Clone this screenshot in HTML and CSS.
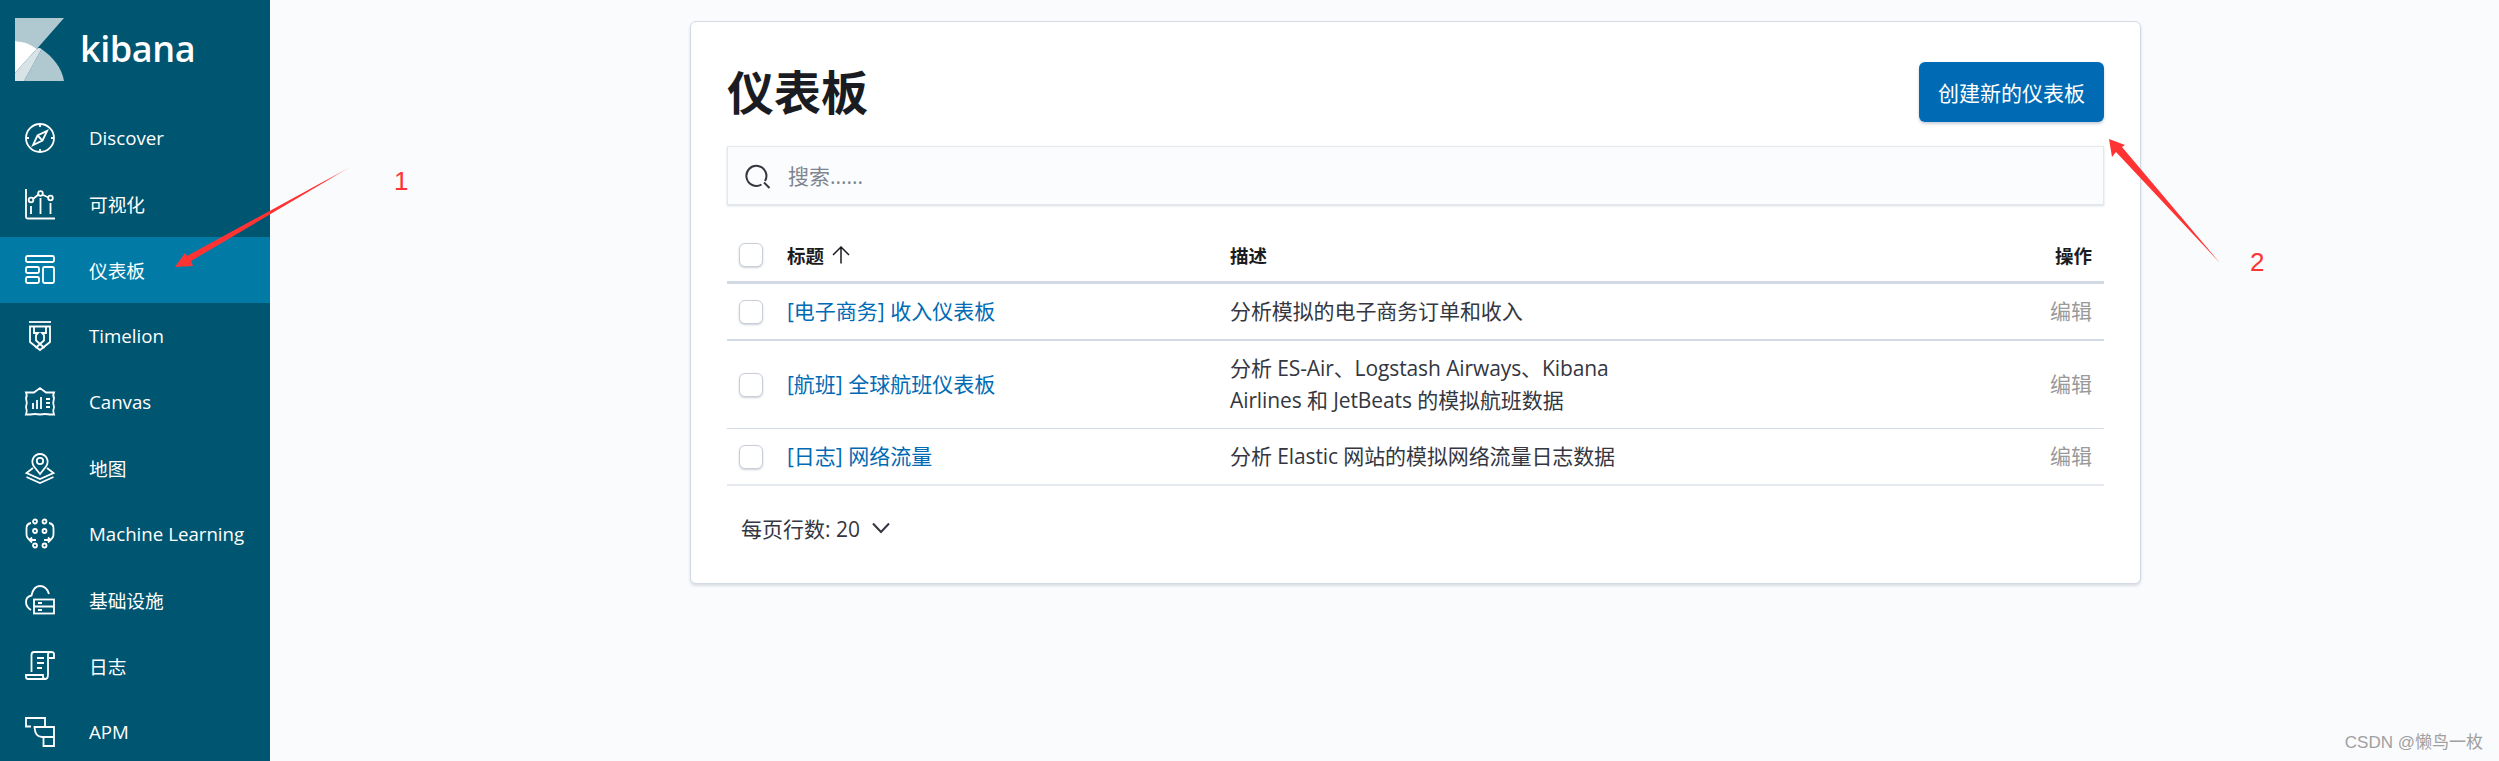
FILE: index.html
```html
<!DOCTYPE html>
<html lang="zh">
<head>
<meta charset="utf-8">
<title>仪表板 - Kibana</title>
<link rel="stylesheet" href="styles.css">
</head>
<body>
<div class="app">
  <aside class="sidebar">
    <div class="brand">
      <svg class="logo" viewBox="0 0 49 63" width="49" height="63">
        <path fill="#b0c8d0" d="M0 0H49L20 33C13 26 8 23.500 0 23Z"/>
        <path fill="#b0c8d0" d="M26.500 31C38 39 47 50 49 63H9Z"/>
        <path fill="#ffffff" d="M0 23C9 23.500 15 26 21.500 31L0 55Z"/>
        <path fill="#d7e3e7" d="M21.500 31Q24 29 26.500 31L9 63H0V55Z"/>
      </svg>
      <span class="wordmark">kibana</span>
    </div>
    <nav class="nav">
      <a class="nav-item"><svg class="ico" viewBox="0 0 30 30"><circle cx="15" cy="15" r="14"/><path d="M15 1V4M15 26V29M1 15H4M26 15H29"/><path d="M22 8L17.500 17.500L8 22L12.500 12.500Z"/><path d="M12.500 12.500L17.500 17.500"/></svg><span class="nav-label">Discover</span></a>
      <a class="nav-item"><svg class="ico" viewBox="0 0 30 30"><path d="M1 0V28Q1 29.500 2.500 29.500H30"/><path d="M8 10L13.500 5.500M18 6L23.500 8.500"/><circle cx="6" cy="11" r="2.300"/><circle cx="15.500" cy="4.500" r="2.300"/><circle cx="25.500" cy="9" r="2.300"/><path d="M6 17V25M15.500 9V25M25.500 14V25"/></svg><span class="nav-label">可视化</span></a>
      <a class="nav-item active"><svg class="ico" viewBox="0 0 30 30"><rect x="1" y="1" width="28" height="6" rx="1.500"/><rect x="1" y="12" width="13" height="6" rx="1.500"/><rect x="1" y="22" width="13" height="6" rx="1.500"/><rect x="18" y="12" width="11" height="16" rx="1.500"/></svg><span class="nav-label">仪表板</span></a>
      <a class="nav-item"><svg class="ico" viewBox="0 0 30 30"><path d="M4 1H26"/><path d="M5 5.500H25V21L15 29L5 21Z"/><path d="M9 6V12H13L11 14V19M21 6V12H17L19 14V19M10.500 19L19.500 27M19.500 19L10.500 27"/></svg><span class="nav-label">Timelion</span></a>
      <a class="nav-item"><svg class="ico" viewBox="0 0 30 30"><path d="M9 5.500L15 1L21 5.500H29Q27.500 9 29 11Q27.500 16 29 20Q27.500 24 29 27.500H25Q20 26.500 15 27.500Q10 26.500 5 27.500H1Q2.500 24 1 20Q2.500 16 1 11Q2.500 9 1 5.500Z"/><path d="M8 16V22M12 13V22M16 10V22M21 12H25M21 16H25M21 20H25"/></svg><span class="nav-label">Canvas</span></a>
      <a class="nav-item"><svg class="ico" viewBox="0 0 30 30"><path d="M15 21L9 13.500C5 8 9 1 15 1C21 1 25 8 21 13.500Z"/><circle cx="15" cy="8" r="3.200"/><path d="M8 15L1.500 20L15 26L28.500 20L22 15"/><path d="M1.500 24L15 30L28.500 24"/></svg><span class="nav-label">地图</span></a>
      <a class="nav-item"><svg class="ico" viewBox="0 0 30 30"><circle cx="10" cy="2.500" r="2"/><circle cx="19.500" cy="2.500" r="2"/><circle cx="10" cy="12" r="2"/><circle cx="19.500" cy="12" r="2"/><circle cx="10" cy="26.500" r="2"/><circle cx="19.500" cy="26.500" r="2"/><path d="M6 4Q1 5 1.500 10V15Q1.500 19 5 21H11M7 18.500L4.500 21L7 23.500"/><path d="M24 4Q29 5 28.500 10V15Q28.500 19 25 21H19M23 18.500L25.500 21L23 23.500"/></svg><span class="nav-label">Machine Learning</span></a>
      <a class="nav-item"><svg class="ico" viewBox="0 0 30 30"><path d="M6 25Q1 22 1 17Q1 11.500 6.500 10.500Q8.500 1 15 1Q21.500 1 24 9"/><rect x="9" y="14.500" width="20" height="14"/><path d="M9 21.500H29M13 18H17M13 25H17"/></svg><span class="nav-label">基础设施</span></a>
      <a class="nav-item"><svg class="ico" viewBox="0 0 30 30"><path d="M23 23V3Q23 1 26 1Q29 1 29 3V7H24"/><path d="M26 1H9Q6.500 1 6.500 4V21"/><path d="M12 7H19M12 12H19M12 17H17"/><path d="M1 24H18V25.500Q18 28 20.500 28H3Q1 28 1 26ZM20.500 28Q23 28 23 23"/></svg><span class="nav-label">日志</span></a>
      <a class="nav-item"><svg class="ico" viewBox="0 0 30 30"><path d="M6 9.500H1V1H20V9.500"/><path d="M9.500 10H29V20H17Q10 20 9.500 10Z"/><path d="M18.500 20V29H29V20"/></svg><span class="nav-label">APM</span></a>
    </nav>
  </aside>
  <main class="main">
    <section class="card">
      <header class="card-head">
        <h1 class="title">仪表板</h1>
        <button class="primary-btn">创建新的仪表板</button>
      </header>
      <div class="search">
        <svg class="search-ico" viewBox="0 0 24 24" width="24" height="24"><path d="M15.500 20.500A10 10 0 1 1 19 17"/><path d="M18 18.500L23.500 24"/></svg>
        <span class="placeholder">搜索......</span>
      </div>
      <table class="table">
        <thead>
          <tr class="head-row">
            <th class="col-check"><span class="checkbox"></span></th>
            <th class="col-title"><span class="sort">标题<svg class="sort-ico" viewBox="0 0 18 18" width="18" height="18"><path d="M9 17.500V1M1 9L9 1L17 9"/></svg></span></th>
            <th class="col-desc">描述</th>
            <th class="col-act">操作</th>
          </tr>
        </thead>
        <tbody>
          <tr class="row-a">
            <td class="col-check"><span class="checkbox"></span></td>
            <td class="col-title"><a class="link">[电子商务] 收入仪表板</a></td>
            <td class="col-desc"><div class="desc">分析模拟的电子商务订单和收入</div></td>
            <td class="col-act edit">编辑</td>
          </tr>
          <tr class="row-b">
            <td class="col-check"><span class="checkbox"></span></td>
            <td class="col-title"><a class="link">[航班] 全球航班仪表板</a></td>
            <td class="col-desc"><div class="desc">分析 ES-Air、Logstash Airways、Kibana Airlines 和 JetBeats 的模拟航班数据</div></td>
            <td class="col-act edit">编辑</td>
          </tr>
          <tr class="row-c">
            <td class="col-check"><span class="checkbox"></span></td>
            <td class="col-title"><a class="link">[日志] 网络流量</a></td>
            <td class="col-desc"><div class="desc">分析 Elastic 网站的模拟网络流量日志数据</div></td>
            <td class="col-act edit">编辑</td>
          </tr>
        </tbody>
      </table>
      <div class="pager">
        <span>每页行数: 20</span>
        <svg class="chev" viewBox="0 0 18 12" width="18" height="12"><path d="M1 1.500L9 10L17 1.500"/></svg>
      </div>
    </section>
  </main>
</div>
<svg class="annotations" viewBox="0 0 2499 761" width="2499" height="761">
  <defs>
    <linearGradient id="fade" gradientUnits="userSpaceOnUse" x1="352" y1="166" x2="325" y2="181">
      <stop offset="0" stop-color="#f33" stop-opacity="0.3"/>
      <stop offset="1" stop-color="#f33"/>
    </linearGradient>
  </defs>
  <path fill="url(#fade)" d="M352 166L187 256L185 253L175 267L193 266L191 261Z"/>
  <path fill="#f33" d="M2220 263L2122 147L2125 145L2109 139L2112 157L2116 152Z"/>
</svg>
<span class="mark mark-one">1</span>
<span class="mark mark-two">2</span>
<span class="watermark">CSDN @懒鸟一枚</span>
</body>
</html>
```
FILE: styles.css
```css
* { box-sizing: border-box; }
html, body {
  margin: 0;
  height: 761px;
  overflow: hidden;
  background: #fafbfd;
  color: #1a1c21;
  font-family: "Open Sans", "Noto Sans CJK SC", sans-serif;
}
.app { display: flex; height: 761px; }

.sidebar {
  flex: 0 0 270px;
  background: #005571;
  color: #fff;
  overflow: hidden;
}
.brand {
  display: flex;
  align-items: flex-start;
  height: 105px;
  padding: 18px 0 0 15px;
}
.logo { flex: none; }
.wordmark {
  margin: 5px 0 0 16px;
  font-size: 36px;
  line-height: 52px;
  font-weight: 600;
  letter-spacing: -0.4px;
}
.nav-item {
  display: flex;
  align-items: center;
  height: 66px;
  padding-left: 25px;
  font-size: 18.7px;
}
.nav-label { padding-bottom: 2px; }
.nav-item.active { background: #017ba6; }
.ico {
  flex: none;
  width: 30px;
  height: 30px;
  margin-right: 34px;
  fill: none;
  stroke: #fff;
  stroke-width: 1.8;
  overflow: visible;
}

.main { flex: 1; padding: 21px 0 0 420px; }
.card {
  width: 1451px;
  padding: 40px 36px 36px;
  background: #fff;
  border: 1px solid #d3dae6;
  border-radius: 6px;
  box-shadow: 0 2px 3px rgba(152, 162, 179, 0.35);
}
.card-head {
  display: flex;
  justify-content: space-between;
  align-items: center;
  height: 60px;
}
.title {
  margin: 0;
  font-size: 47px;
  line-height: 60px;
  font-weight: 700;
}
.primary-btn {
  width: 185px;
  height: 60px;
  padding: 0;
  border: 0;
  border-radius: 6px;
  background: #006bb4;
  color: #fff;
  font: 400 21px "Open Sans", "Noto Sans CJK SC", sans-serif;
  box-shadow: 0 2px 3px rgba(152, 162, 179, 0.5);
}
.search {
  display: flex;
  align-items: center;
  height: 59px;
  margin-top: 24px;
  padding-left: 18px;
  background: #fbfcfd;
  border: 1px solid #e4e7ec;
  box-shadow: 0 1px 2px rgba(152, 162, 179, 0.4);
}
.search-ico {
  margin-right: 18px;
  fill: none;
  stroke: #343741;
  stroke-width: 2;
  overflow: visible;
}
.placeholder { padding-bottom: 2px; font-size: 21px; color: #7e8591; }

.table {
  width: 1377px;
  margin-top: 24px;
  border-collapse: separate;
  border-spacing: 0;
  table-layout: fixed;
  font-size: 21px;
}
th, td { padding: 0; font-weight: 400; text-align: left; }
th { font-size: 18.5px; font-weight: 700; }
.head-row th { height: 55px; border-bottom: 3px solid #d3dae6; }
.row-a td { height: 57px; border-bottom: 2px solid #d3dae6; }
.row-b td { height: 88px; border-bottom: 1px solid #d3dae6; }
.row-c td { height: 57px; border-bottom: 2px solid #e4e8ef; }
.col-check { width: 60px; padding-left: 12px; }
.col-title { width: 443px; }
.col-act { width: 120px; padding-right: 12px; text-align: right; }
th.col-act { text-align: right; }
td.col-title, td.col-act { padding-bottom: 4px; }
td.col-desc { padding-bottom: 2px; }
.checkbox {
  display: block;
  width: 24px;
  height: 24px;
  background: #fff;
  border: 1px solid #c9cfd9;
  border-radius: 6px;
  box-shadow: 0 1px 2px rgba(152, 162, 179, 0.5);
}
.sort { display: inline-flex; align-items: center; gap: 8px; }
.sort-ico { fill: none; stroke: #1a1c21; stroke-width: 1.500; }
.link { color: #006bb4; }
.desc { width: 410px; line-height: 32px; letter-spacing: -0.1px; color: #343741; }
td.edit { color: #9a9a9a; text-align: right; }
.pager {
  display: flex;
  align-items: center;
  gap: 12px;
  height: 36px;
  margin-top: 24px;
  margin-bottom: 1px;
  padding-left: 14px;
  font-size: 21px;
  color: #343741;
}
.chev { fill: none; stroke: #343741; stroke-width: 2; }

.annotations { position: absolute; left: 0; top: 0; pointer-events: none; }
.mark {
  position: absolute;
  font: 26px/30px "Liberation Sans", sans-serif;
  color: #f33;
}
.mark-one { left: 394px; top: 166px; }
.mark-two { left: 2250px; top: 247px; }
.watermark {
  position: absolute;
  right: 16px;
  top: 732px;
  font: 17px/22px "Liberation Sans", "Noto Sans CJK SC", sans-serif;
  color: #a0a0a0;
}
```
